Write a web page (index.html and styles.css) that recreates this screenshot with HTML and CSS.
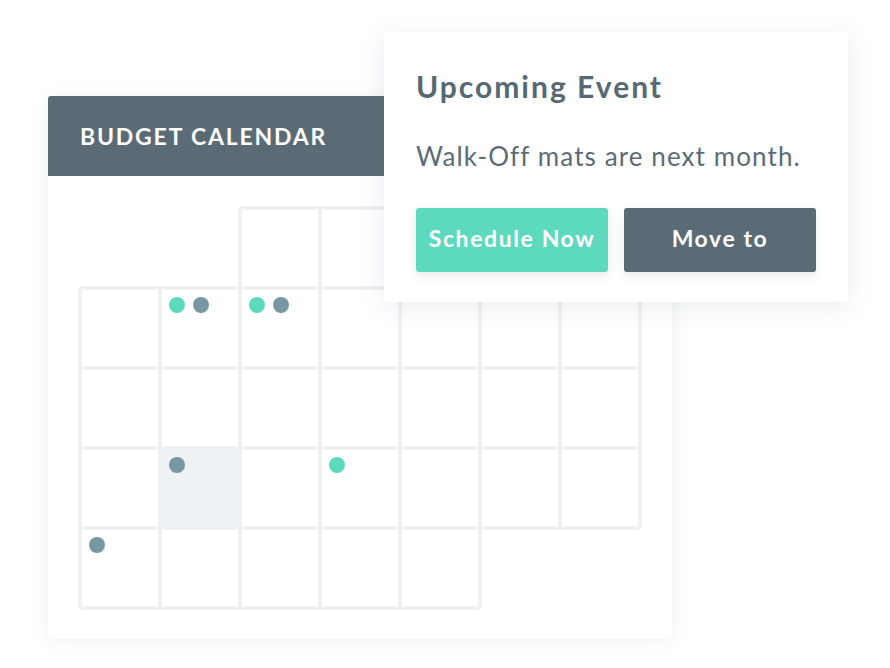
FILE: index.html
```html
<!DOCTYPE html>
<html>
<head>
<meta charset="utf-8">
<link rel="stylesheet" href="styles.css">
</head>
<body>
<div class="stage">
  <div class="card">
    <div class="card-header">BUDGET CALENDAR</div>
    <div class="card-body">
      <div class="month">
        <div class="day first"></div>
        <div class="day"></div>
        <div class="day"></div>
        <div class="day"></div>
        <div class="day corner-tr"></div>

        <div class="day corner-tl"></div>
        <div class="day"><span class="dot teal"></span><span class="dot slate"></span></div>
        <div class="day"><span class="dot teal"></span><span class="dot slate"></span></div>
        <div class="day"></div>
        <div class="day"></div>
        <div class="day"></div>
        <div class="day"></div>

        <div class="day"></div>
        <div class="day"></div>
        <div class="day"></div>
        <div class="day"></div>
        <div class="day"></div>
        <div class="day"></div>
        <div class="day"></div>

        <div class="day"></div>
        <div class="day shaded"><span class="dot slate"></span></div>
        <div class="day"></div>
        <div class="day"><span class="dot teal"></span></div>
        <div class="day"></div>
        <div class="day"></div>
        <div class="day corner-br"></div>

        <div class="day corner-bl"><span class="dot slate"></span></div>
        <div class="day"></div>
        <div class="day"></div>
        <div class="day"></div>
        <div class="day corner-br"></div>
      </div>
    </div>
  </div>

  <div class="popup">
    <h2 class="popup-title">Upcoming Event</h2>
    <p class="popup-text">Walk-Off mats are next month.</p>
    <div class="popup-actions">
      <button class="btn btn-primary">Schedule Now</button>
      <button class="btn btn-secondary">Move to</button>
    </div>
  </div>
</div>
</body>
</html>
```

FILE: styles.css
```css
html, body {
  margin: 0;
  padding: 0;
  background: #ffffff;
}

body {
  font-family: Lato, "Open Sans", sans-serif;
  width: 890px;
  height: 668px;
  overflow: hidden;
}

.stage {
  position: relative;
  width: 890px;
  height: 668px;
  padding: 96px 0 0 48px;
  box-sizing: border-box;
}

.card {
  width: 624px;
  height: 543px;
  background: #ffffff;
  border-radius: 3px;
  box-shadow: 0 2px 18px rgba(70, 100, 120, 0.09);
  overflow: hidden;
}

.card-header {
  height: 80px;
  line-height: 80px;
  background: #5a6b75;
  color: #ffffff;
  font-size: 23px;
  font-weight: 700;
  padding-left: 32px;
  letter-spacing: 1.8px;
}

.card-body {
  padding: 30px 0 0 30px;
}

.month {
  display: grid;
  grid-template-columns: repeat(7, 80px);
  grid-template-rows: repeat(5, 80px);
  width: 564px;
  height: 404px;
}

.day {
  width: 84px;
  height: 84px;
  box-sizing: border-box;
  border: 4px solid #eef2f5;
  background: #ffffff;
  padding: 7px 0 0 7px;
  display: flex;
  gap: 8px;
  align-items: flex-start;
}

.day.first {
  grid-column-start: 3;
  border-top-left-radius: 5px;
}

.corner-tr { border-top-right-radius: 5px; }
.corner-tl { border-top-left-radius: 5px; }
.corner-br { border-bottom-right-radius: 5px; }
.corner-bl { border-bottom-left-radius: 5px; }

.day.shaded {
  background: #eef2f5;
}

.dot {
  width: 16px;
  height: 16px;
  border-radius: 50%;
  flex: none;
}

.dot.teal { background: #5dd9bd; }
.dot.slate { background: #7897a2; }

.popup {
  position: absolute;
  left: 384px;
  top: 32px;
  width: 464px;
  height: 270px;
  box-sizing: border-box;
  padding: 36px 32px 0 32px;
  background: #ffffff;
  border-radius: 3px;
  box-shadow: 0 4px 26px rgba(70, 100, 120, 0.12);
}

.popup-title {
  margin: 0;
  font-size: 30px;
  line-height: 36px;
  font-weight: 700;
  letter-spacing: 2px;
  color: #566973;
}

.popup-text {
  margin: 36px 0 0 0;
  font-size: 26px;
  line-height: 32px;
  font-weight: 400;
  letter-spacing: 1.1px;
  color: #5a6b75;
}

.popup-actions {
  display: flex;
  gap: 16px;
  margin-top: 36px;
}

.btn {
  width: 192px;
  height: 64px;
  border: none;
  border-radius: 3px;
  color: #ffffff;
  font-family: Lato, "Open Sans", sans-serif;
  font-size: 23px;
  font-weight: 700;
  letter-spacing: 1.6px;
  padding: 0 0 4px 0;
  box-shadow: 0 4px 12px rgba(60, 90, 110, 0.12);
}

.btn-primary { background: #5ddabd; }
.btn-secondary { background: #5a6b75; }
```
